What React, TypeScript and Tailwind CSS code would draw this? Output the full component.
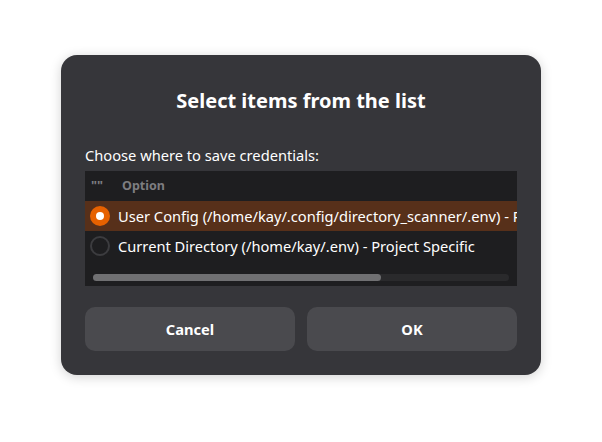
import { useState } from "react";

const options = [
  "User Config (/home/kay/.config/directory_scanner/.env) - Recommended",
  "Current Directory (/home/kay/.env) - Project Specific",
];

function Radio({ checked }: { checked: boolean }) {
  if (checked) {
    return (
      <span className="flex h-[20px] w-[20px] shrink-0 items-center justify-center rounded-full bg-[#e66100]">
        <span className="h-[8px] w-[8px] rounded-full bg-white" />
      </span>
    );
  }
  return <span className="h-[20px] w-[20px] shrink-0 rounded-full border-2 border-[#3c3c3f]" />;
}

export default function App() {
  const [selected, setSelected] = useState(0);

  return (
    <div className="flex min-h-[442px] justify-center bg-white pt-[55px] font-['Noto_Sans',sans-serif]">
      <div className="flex h-[320px] w-[480px] flex-col rounded-[16px] bg-[#36363a] px-[24px] pb-[24px] shadow-[0_2px_12px_rgba(0,0,0,0.18)]">
        <h1 className="mt-[33px] text-center text-[20px] font-bold leading-[26px] text-white">
          Select items from the list
        </h1>

        <p className="mt-[32px] text-[14.67px] leading-[18px] text-white">Choose where to save credentials:</p>

        <div className="mt-[7px] h-[115px] overflow-hidden bg-[#1e1e20]">
          <div className="flex h-[30px] items-center text-[12.5px] font-bold text-[#7d7d80]">
            <span className="w-[37px] pl-[6px] leading-none">""</span>
            <span>Option</span>
          </div>
          {options.map((opt, i) => (
            <div
              key={opt}
              onClick={() => setSelected(i)}
              className={
                "flex h-[30px] items-center gap-[8px] pl-[5px] " + (selected === i ? "bg-[#57301a]" : "")
              }
            >
              <Radio checked={selected === i} />
              <span className="whitespace-nowrap text-[14.67px] text-white">{opt}</span>
            </div>
          ))}
          <div className="mx-[8px] mt-[13px] h-[7px] rounded-full bg-[#2a2a2c]">
            <div className="h-full w-[288px] rounded-full bg-[#707072]" />
          </div>
        </div>

        <div className="mt-auto flex gap-[12px]">
          <button className="h-[44px] flex-1 rounded-[10px] bg-[#4a4a4e] text-[14.67px] font-bold text-white">
            Cancel
          </button>
          <button className="h-[44px] flex-1 rounded-[10px] bg-[#4a4a4e] text-[14.67px] font-bold text-white">
            OK
          </button>
        </div>
      </div>
    </div>
  );
}
